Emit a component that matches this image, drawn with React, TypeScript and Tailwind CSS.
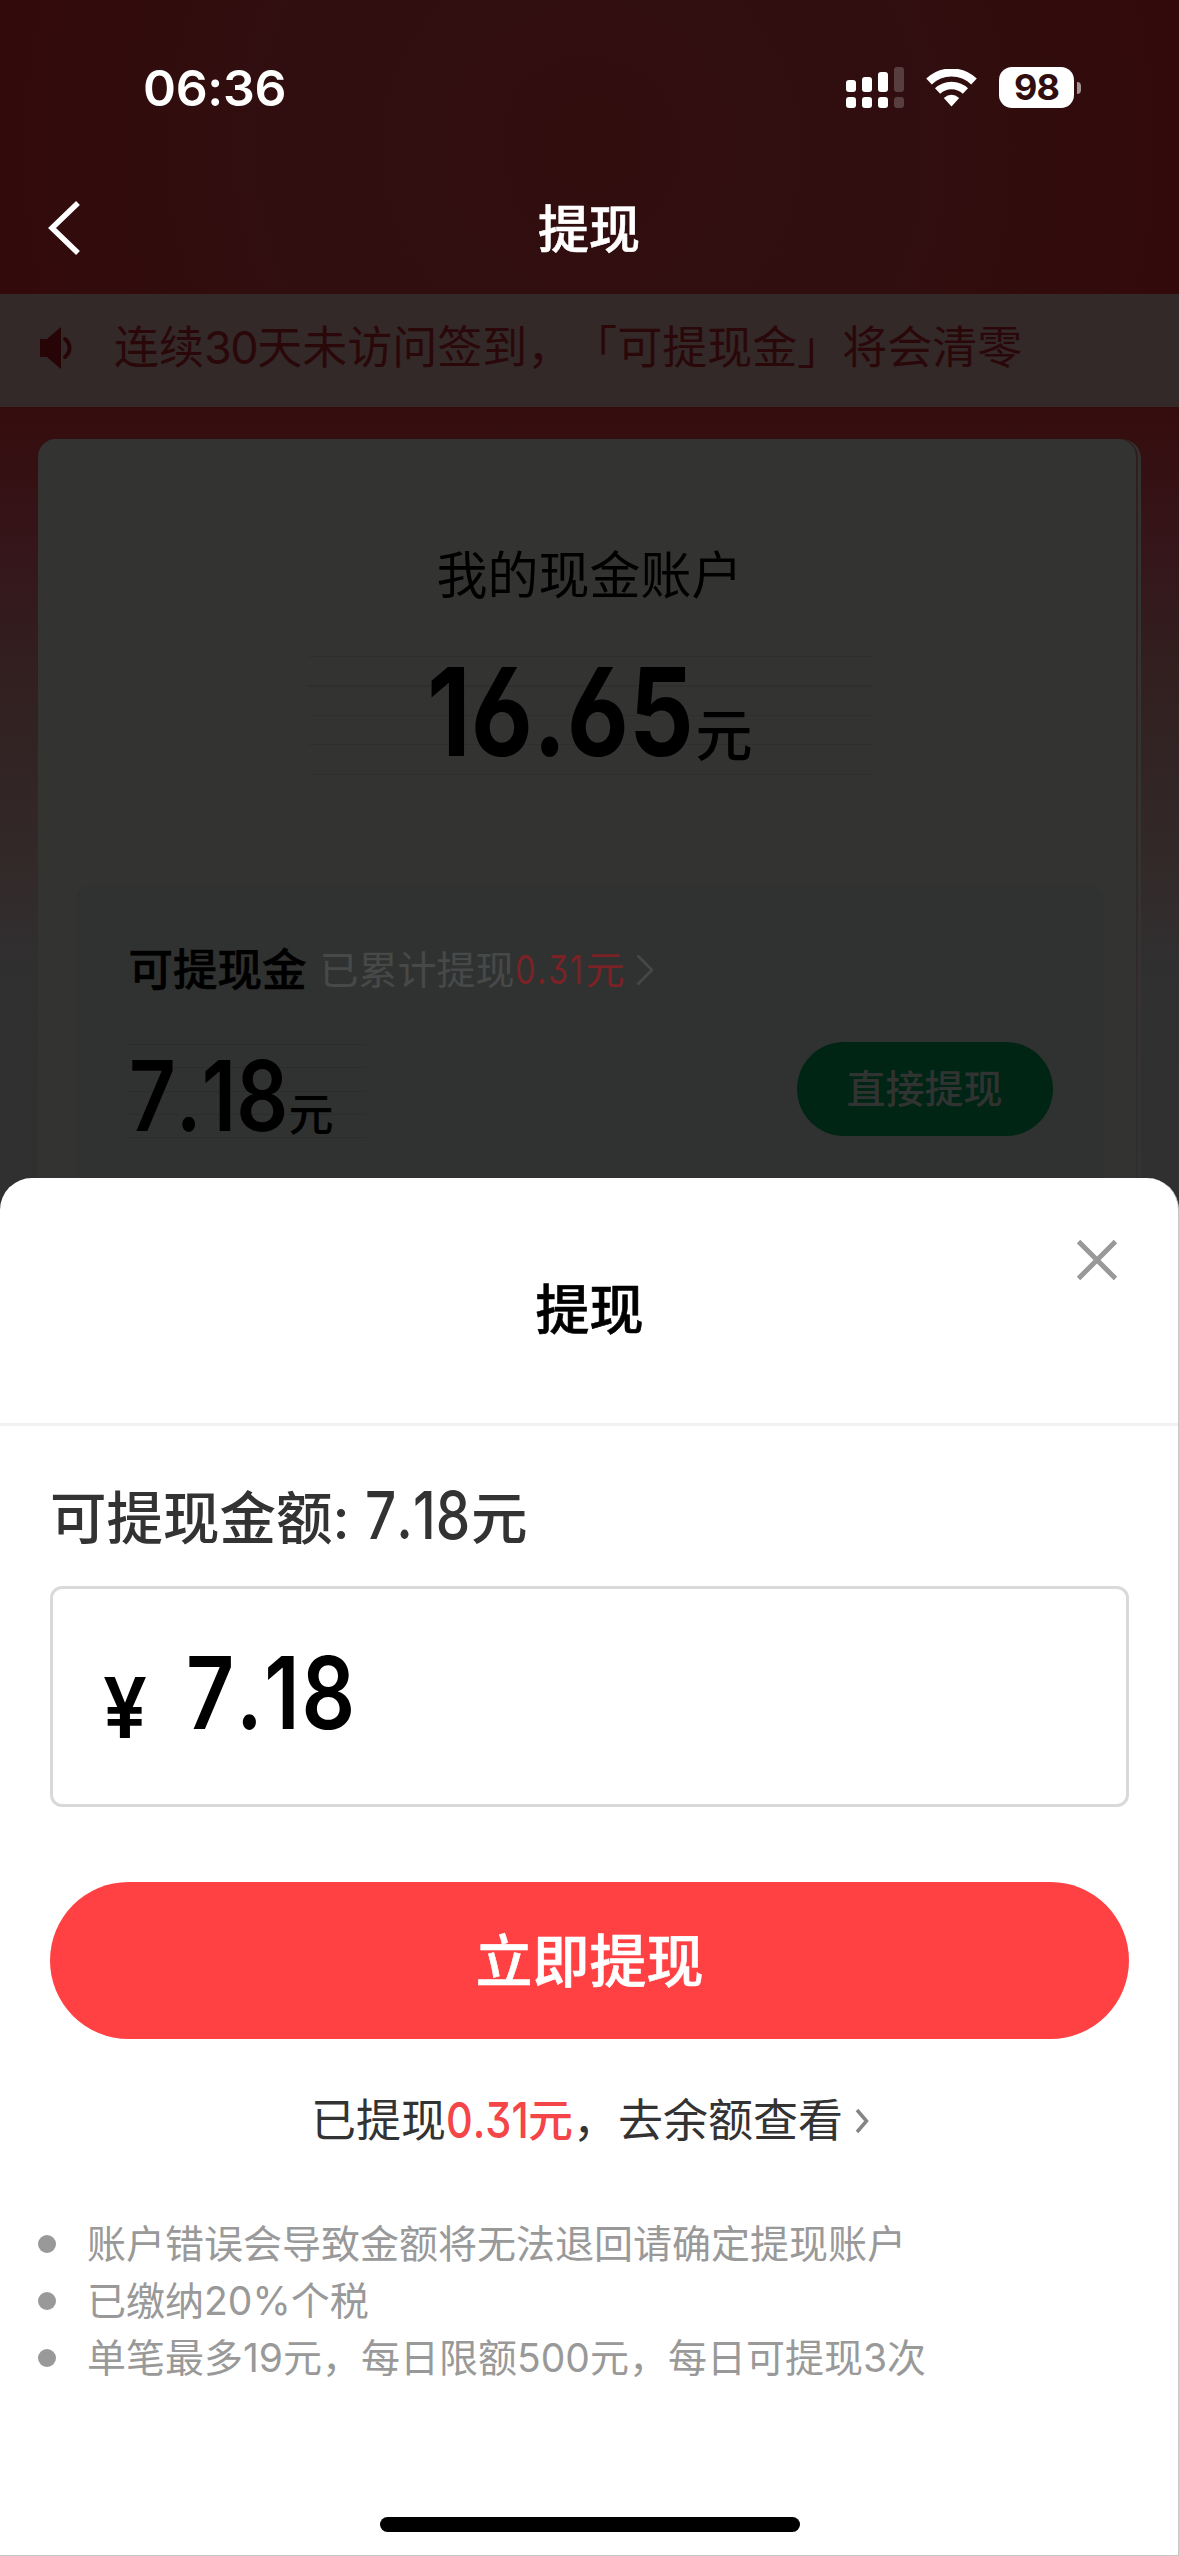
import type { ReactNode } from "react";

const tips = [
  "账户错误会导致金额将无法退回请确定提现账户",
  "已缴纳20%个税",
  "单笔最多19元，每日限额500元，每日可提现3次",
];

function StatusBar() {
  return (
    <div className="flex h-[162px] items-start justify-between pl-[143px] pr-[98px]">
      <span className="mt-[58px] text-[50px] leading-[60px] font-semibold tracking-[-0.3px]">06:36</span>
      <div className="mt-[67px] flex items-start">
        <svg width="58" height="41" viewBox="0 0 58 41" fill="#fff">
          <rect x="0" y="13" width="10" height="12" rx="3" />
          <rect x="16" y="10" width="10" height="15" rx="3" />
          <rect x="32" y="5" width="10" height="20" rx="3" />
          <rect x="48" y="0" width="10" height="25" rx="3" opacity="0.2" />
          <rect x="0" y="30" width="10" height="11" rx="3" />
          <rect x="16" y="30" width="10" height="11" rx="3" />
          <rect x="32" y="30" width="10" height="11" rx="3" />
          <rect x="48" y="30" width="10" height="11" rx="3" opacity="0.2" />
        </svg>
        <svg className="ml-[22px] mt-[2px]" width="51" height="38" viewBox="0 0 51 38" fill="none">
          <path d="M3 12.5a32.5 32.5 0 0 1 45 0" stroke="#fff" strokeWidth="8" />
          <path d="M11.6 22a20 20 0 0 1 27.8 0" stroke="#fff" strokeWidth="7.5" />
          <path d="M25.5 37.5 17.8 29q7.7-6.5 15.4 0z" fill="#fff" />
        </svg>
        <div className="ml-[22px] flex h-[41px] w-[75px] items-center justify-center rounded-[13px] bg-white text-[36px] leading-[41px] font-bold tracking-[-1px] text-[#300e0f]">
          98
        </div>
        <div className="ml-[3px] mt-[15px] h-[12px] w-[4px] rounded-r-full bg-[#a39394]" />
      </div>
    </div>
  );
}

function NavBar() {
  return (
    <div className="flex h-[132px] items-start px-[48px]">
      <svg className="mt-[39px]" width="33" height="54" viewBox="0 0 33 54" fill="none">
        <path d="M30 2 4 27l26 25" stroke="#fff" strokeWidth="5.5" />
      </svg>
      <h1 className="mr-[34px] mt-[38px] flex-1 text-center text-[51px] leading-[60px] font-medium [-webkit-text-stroke:0.6px]">提现</h1>
    </div>
  );
}

function Notice() {
  return (
    <div className="flex h-[113px] items-center bg-[#332928] pl-[40px] text-[#2a080a]">
      <svg className="-mt-[6px]" width="33" height="42" viewBox="0 0 33 42" fill="none">
        <path d="M0 12h7L21 0v42L7 30H0z" fill="#270406" />
        <path d="M25 12c6 5 6 13 0 18" stroke="#270406" strokeWidth="4" strokeLinecap="round" />
      </svg>
      <p className="-mt-[6px] ml-[41px] text-[45px] leading-[60px] whitespace-nowrap">
        连续<span className="tracking-[-1.5px]">30</span>天未访问签到，「可提现金」将会清零
      </p>
    </div>
  );
}

// Condensed numerals used for every amount
function Amount({ className, children }: { className: string; children: ReactNode }) {
  return (
    <span className={`inline-block origin-left scale-x-[0.83] whitespace-nowrap [font-kerning:none] [font-feature-settings:'cv03','ss01','calt'_0] ${className}`}>
      {children}
    </span>
  );
}

function AccountCard() {
  return (
    <div className="mx-[38px] mt-[32px] h-[760px] rounded-t-[20px] bg-[#333332] pr-[3px]">
      <div className="h-full rounded-t-[18px] bg-linear-to-b from-[#321c1e] to-[#312f30] pr-[2px]">
        <div className="flex h-full flex-col items-center rounded-t-[18px] bg-[#333332] pl-[5px] text-black">
          <h2 className="mt-[107px] text-[51px] leading-[60px]">我的现金账户</h2>
          <div className="mt-[50px] flex h-[119px] w-[564px] items-baseline justify-center bg-[repeating-linear-gradient(to_bottom,#2f2f2f_0,#2f2f2f_1px,transparent_1px,transparent_29.5px)]">
            <Amount className="w-[269px] text-[122px] leading-[112px] font-bold">16.65</Amount>
            <span className="text-[57px] leading-[60px] font-medium">元</span>
          </div>
          <div className="mt-[110px] flex w-[1028px] flex-1 flex-col rounded-t-[15px] bg-[#303231] pt-[55px] pr-[51px] pl-[53px]">
            <div className="flex h-[60px] items-center">
              <span className="text-[44.5px] font-medium [-webkit-text-stroke:0.6px]">可提现金</span>
              <span className="ml-[13px] text-[39px] text-[#474949]">已累计提现</span>
              <span className="w-[71px] text-[39px] text-[#7a2225]">
                <Amount className="tracking-[2px]">0.31</Amount>
              </span>
              <span className="text-[39px] text-[#7a2225]">元</span>
              <svg className="ml-[11px]" width="18" height="32" viewBox="0 0 18 32" fill="none">
                <path d="M1.5 1.5 16 16 1.5 30.5" stroke="#474949" strokeWidth="2.5" />
              </svg>
            </div>
            <div className="mt-[42px] flex items-start justify-between">
              <div className="mt-[2px] flex h-[94px] w-[237px] items-baseline bg-[repeating-linear-gradient(to_bottom,#2b2d2c_0,#2b2d2c_1px,transparent_1px,transparent_23.3px)]">
                <Amount className="w-[160px] text-[98px] leading-[104px] font-semibold">7.18</Amount>
                <span className="text-[45px] leading-[60px] font-medium">元</span>
              </div>
              <button className="h-[94px] w-[256px] rounded-full bg-[#002514] text-[39px] font-medium text-[#303332]">
                直接提现
              </button>
            </div>
          </div>
        </div>
      </div>
    </div>
  );
}

function WithdrawSheet() {
  return (
    <section className="absolute inset-x-0 bottom-0 flex h-[1378px] flex-col rounded-t-[32px] border-r border-b border-[#c6c6c6] bg-white text-[#333]">
      <div className="relative flex h-[248px] items-center justify-center border-b-3 border-[#f2f2f2]">
        <h2 className="mt-[20px] ml-[1px] text-[54px] leading-[60px] font-medium text-black [-webkit-text-stroke:0.6px]">提现</h2>
        <svg className="absolute top-[62px] right-[61px]" width="40" height="40" viewBox="0 0 40 40" fill="none">
          <path d="m1.5 1.5 37 37m0-37-37 37" stroke="#999" strokeWidth="5" />
        </svg>
      </div>
      <div className="flex flex-col pr-[49px] pl-[50px]">
        <p className="mt-[56px] flex h-[70px] items-baseline text-[56.5px] leading-[66px] font-medium whitespace-nowrap">
          <span className="w-[302px] shrink-0">可提现金额:</span>
          <Amount className="ml-[13px] w-[106px] text-[66px]">7.18</Amount>
          <span>元</span>
        </p>
        <div className="mt-[34px] flex h-[221px] items-baseline rounded-[12px] border-3 border-[#d9d9d9] pt-[48px] pl-[50px] text-black">
          <span className="w-[83px] origin-left translate-y-[9px] scale-x-[0.93] text-[84px] leading-[110px] font-semibold">¥</span>
          <Amount className="text-[101px] leading-[110px] font-semibold tracking-[2px]">7.18</Amount>
        </div>
        <button className="mt-[75px] h-[157px] rounded-full bg-[#ff4144] pt-[3px] text-[57px] font-medium text-white [-webkit-text-stroke:0.6px]">
          立即提现
        </button>
      </div>
      <div className="mt-[52px] flex h-[60px] items-center pl-[311px] text-[45px] leading-[60px] whitespace-nowrap">
        <span>已提现</span>
        <span className="w-[82px] text-[#f44549]">
          <Amount className="text-[50px] font-medium">0.31</Amount>
        </span>
        <span className="font-medium text-[#f44549]">元</span>
        <span>，去余额查看</span>
        <svg className="ml-[12px]" width="14" height="26" viewBox="0 0 14 26" fill="none">
          <path d="m2 2 9.5 11L2 24" stroke="#858585" strokeWidth="3.5" />
        </svg>
      </div>
      <ul className="mt-[64px] pl-[38px] text-[39px] leading-[57px] text-[#999]">
        {tips.map((tip) => (
          <li key={tip} className="flex items-center whitespace-nowrap">
            <span className="mr-[31px] size-[18px] rounded-full bg-[#999]" />
            {tip}
          </li>
        ))}
      </ul>
      <div className="mt-auto mb-[23px] ml-[380px] h-[15px] w-[420px] rounded-full bg-black" />
    </section>
  );
}

export default function App() {
  return (
    <main className="relative h-[2556px] w-[1179px] overflow-hidden bg-[#303030] font-['Inter','Noto_Sans_CJK_SC',sans-serif] [text-spacing-trim:space-all]">
      <header className="bg-[radial-gradient(circle_at_50%_50%,#310d0e_0%,#300e0f_50%,#330a0b_100%)] text-white">
        <StatusBar />
        <NavBar />
      </header>
      <Notice />
      <div className="flow-root bg-[linear-gradient(to_bottom,#350c0d_0px,#35161a_150px,#32201f_270px,#322425_360px,#332929_455px,#302f30_555px,#303030_760px)]">
        <AccountCard />
      </div>
      <WithdrawSheet />
    </main>
  );
}
